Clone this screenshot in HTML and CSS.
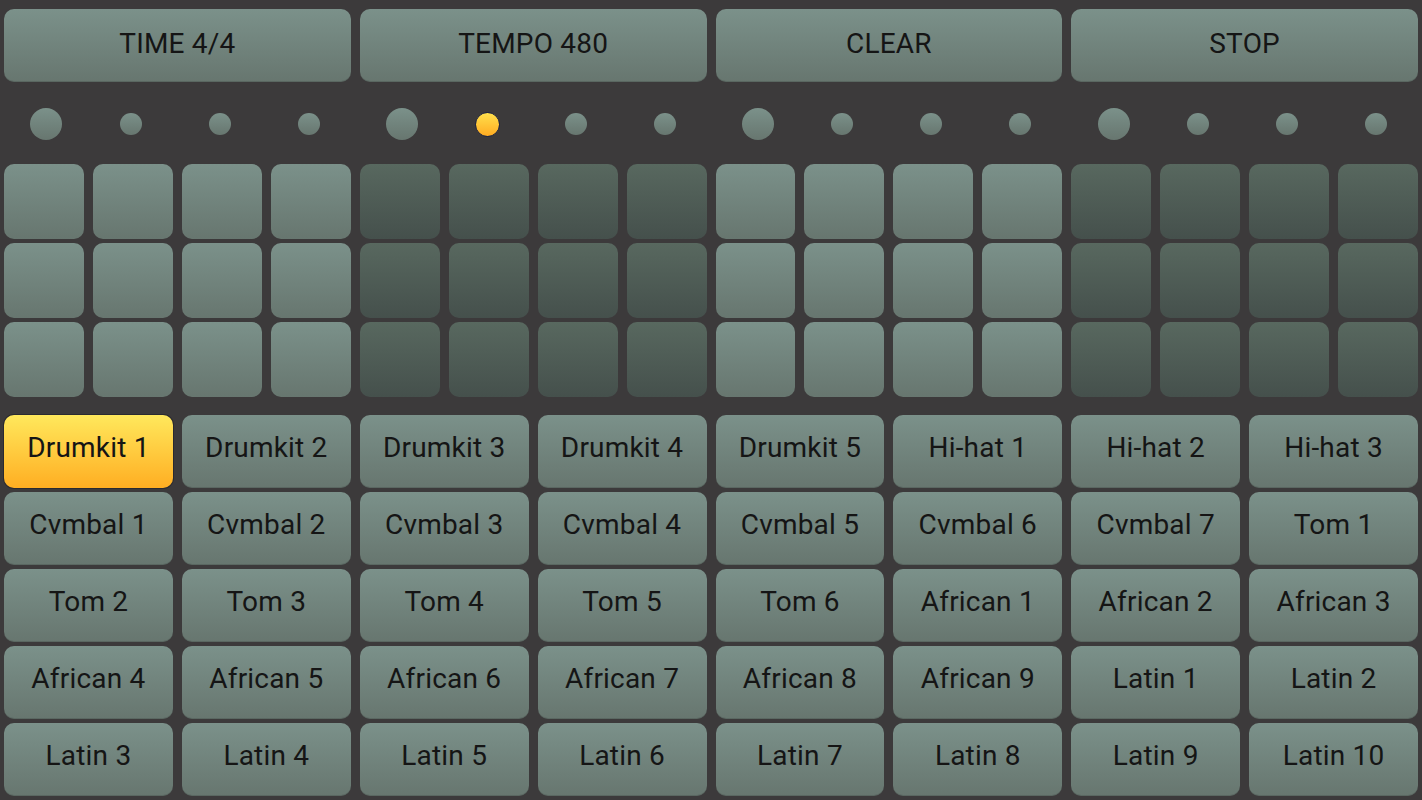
FILE: index.html
```html
<!DOCTYPE html>
<html lang="en">

<head>
    <meta charset="UTF-8">
    <meta name="viewport" content="width=device-width, initial-scale=1.0">
    <title>Drum Machine</title>
    <link rel="stylesheet" href="styles.css">
</head>

<body>
    <div class="top-bar">
        <button class="tile">TIME 4/4</button>
        <button class="tile">TEMPO 480</button>
        <button class="tile">CLEAR</button>
        <button class="tile">STOP</button>
    </div>

    <div class="beats">
        <span class="dot big"></span><span class="dot"></span><span class="dot"></span><span class="dot"></span>
        <span class="dot big"></span><span class="dot on"></span><span class="dot"></span><span class="dot"></span>
        <span class="dot big"></span><span class="dot"></span><span class="dot"></span><span class="dot"></span>
        <span class="dot big"></span><span class="dot"></span><span class="dot"></span><span class="dot"></span>
    </div>

    <div class="pads">
        <div class="pad"></div><div class="pad"></div><div class="pad"></div><div class="pad"></div>
        <div class="pad dark"></div><div class="pad dark"></div><div class="pad dark"></div><div class="pad dark"></div>
        <div class="pad"></div><div class="pad"></div><div class="pad"></div><div class="pad"></div>
        <div class="pad dark"></div><div class="pad dark"></div><div class="pad dark"></div><div class="pad dark"></div>

        <div class="pad"></div><div class="pad"></div><div class="pad"></div><div class="pad"></div>
        <div class="pad dark"></div><div class="pad dark"></div><div class="pad dark"></div><div class="pad dark"></div>
        <div class="pad"></div><div class="pad"></div><div class="pad"></div><div class="pad"></div>
        <div class="pad dark"></div><div class="pad dark"></div><div class="pad dark"></div><div class="pad dark"></div>

        <div class="pad"></div><div class="pad"></div><div class="pad"></div><div class="pad"></div>
        <div class="pad dark"></div><div class="pad dark"></div><div class="pad dark"></div><div class="pad dark"></div>
        <div class="pad"></div><div class="pad"></div><div class="pad"></div><div class="pad"></div>
        <div class="pad dark"></div><div class="pad dark"></div><div class="pad dark"></div><div class="pad dark"></div>
    </div>

    <div class="sounds">
        <button class="tile selected">Drumkit 1</button>
        <button class="tile">Drumkit 2</button>
        <button class="tile">Drumkit 3</button>
        <button class="tile">Drumkit 4</button>
        <button class="tile">Drumkit 5</button>
        <button class="tile">Hi-hat 1</button>
        <button class="tile">Hi-hat 2</button>
        <button class="tile">Hi-hat 3</button>

        <button class="tile">Cvmbal 1</button>
        <button class="tile">Cvmbal 2</button>
        <button class="tile">Cvmbal 3</button>
        <button class="tile">Cvmbal 4</button>
        <button class="tile">Cvmbal 5</button>
        <button class="tile">Cvmbal 6</button>
        <button class="tile">Cvmbal 7</button>
        <button class="tile">Tom 1</button>

        <button class="tile">Tom 2</button>
        <button class="tile">Tom 3</button>
        <button class="tile">Tom 4</button>
        <button class="tile">Tom 5</button>
        <button class="tile">Tom 6</button>
        <button class="tile">African 1</button>
        <button class="tile">African 2</button>
        <button class="tile">African 3</button>

        <button class="tile">African 4</button>
        <button class="tile">African 5</button>
        <button class="tile">African 6</button>
        <button class="tile">African 7</button>
        <button class="tile">African 8</button>
        <button class="tile">African 9</button>
        <button class="tile">Latin 1</button>
        <button class="tile">Latin 2</button>

        <button class="tile">Latin 3</button>
        <button class="tile">Latin 4</button>
        <button class="tile">Latin 5</button>
        <button class="tile">Latin 6</button>
        <button class="tile">Latin 7</button>
        <button class="tile">Latin 8</button>
        <button class="tile">Latin 9</button>
        <button class="tile">Latin 10</button>
    </div>
</body>

</html>
```

FILE: styles.css
```css
body {
    margin: 0;
    padding: 9px 4px 4px;
    background-color: #3c3a3b;
    font-family: Roboto, "Liberation Sans", sans-serif;
    overflow: hidden;
}

.tile {
    margin: 0;
    padding: 0;
    border: none;
    border-radius: 10px;
    background: linear-gradient(to bottom, #7b918a, #67766f);
    box-shadow: inset 0 -1px 0 rgba(0, 0, 0, 0.12);
    color: #151515;
    font-family: inherit;
    font-size: 28px;
    letter-spacing: 0.2px;
    cursor: pointer;
}

.top-bar {
    display: grid;
    grid-template-columns: repeat(4, 1fr);
    gap: 9px;
    height: 73px;
}

.top-bar .tile {
    padding-bottom: 4px;
}

.beats {
    display: grid;
    grid-template-columns: repeat(16, 1fr);
    column-gap: 9px;
    align-items: center;
    justify-items: center;
    height: 82px;
}

.dot {
    width: 22px;
    height: 22px;
    border-radius: 50%;
    margin-right: 4px;
    margin-top: 2px;
    background: linear-gradient(to bottom, #7b918a, #67766f);
}

.dot.big {
    width: 32px;
    height: 32px;
    margin-right: 0;
    margin-left: 5px;
}

.dot.on {
    box-sizing: border-box;
    width: 25px;
    height: 25px;
    margin-right: 3px;
    margin-left: 0;
    background: linear-gradient(to bottom, #ffe04c, #ffab22);
    border: 1px solid #1c2340;
}

.pads {
    display: grid;
    grid-template-columns: repeat(16, 1fr);
    grid-auto-rows: 75px;
    gap: 4px 9px;
}

.pad {
    border-radius: 10px;
    background: linear-gradient(to bottom, #7b918a, #67766f);
}

.pad.dark {
    background: linear-gradient(to bottom, #58685f, #45504c);
}

.sounds {
    display: grid;
    grid-template-columns: repeat(8, 1fr);
    grid-auto-rows: 73px;
    gap: 4px 9px;
    margin-top: 18px;
}

.sounds .tile {
    padding-bottom: 8px;
}

.tile.selected {
    background: linear-gradient(to bottom, #ffe85c, #ffae22);
    box-shadow: 0 0 0 1px #2a2a30;
}
```
